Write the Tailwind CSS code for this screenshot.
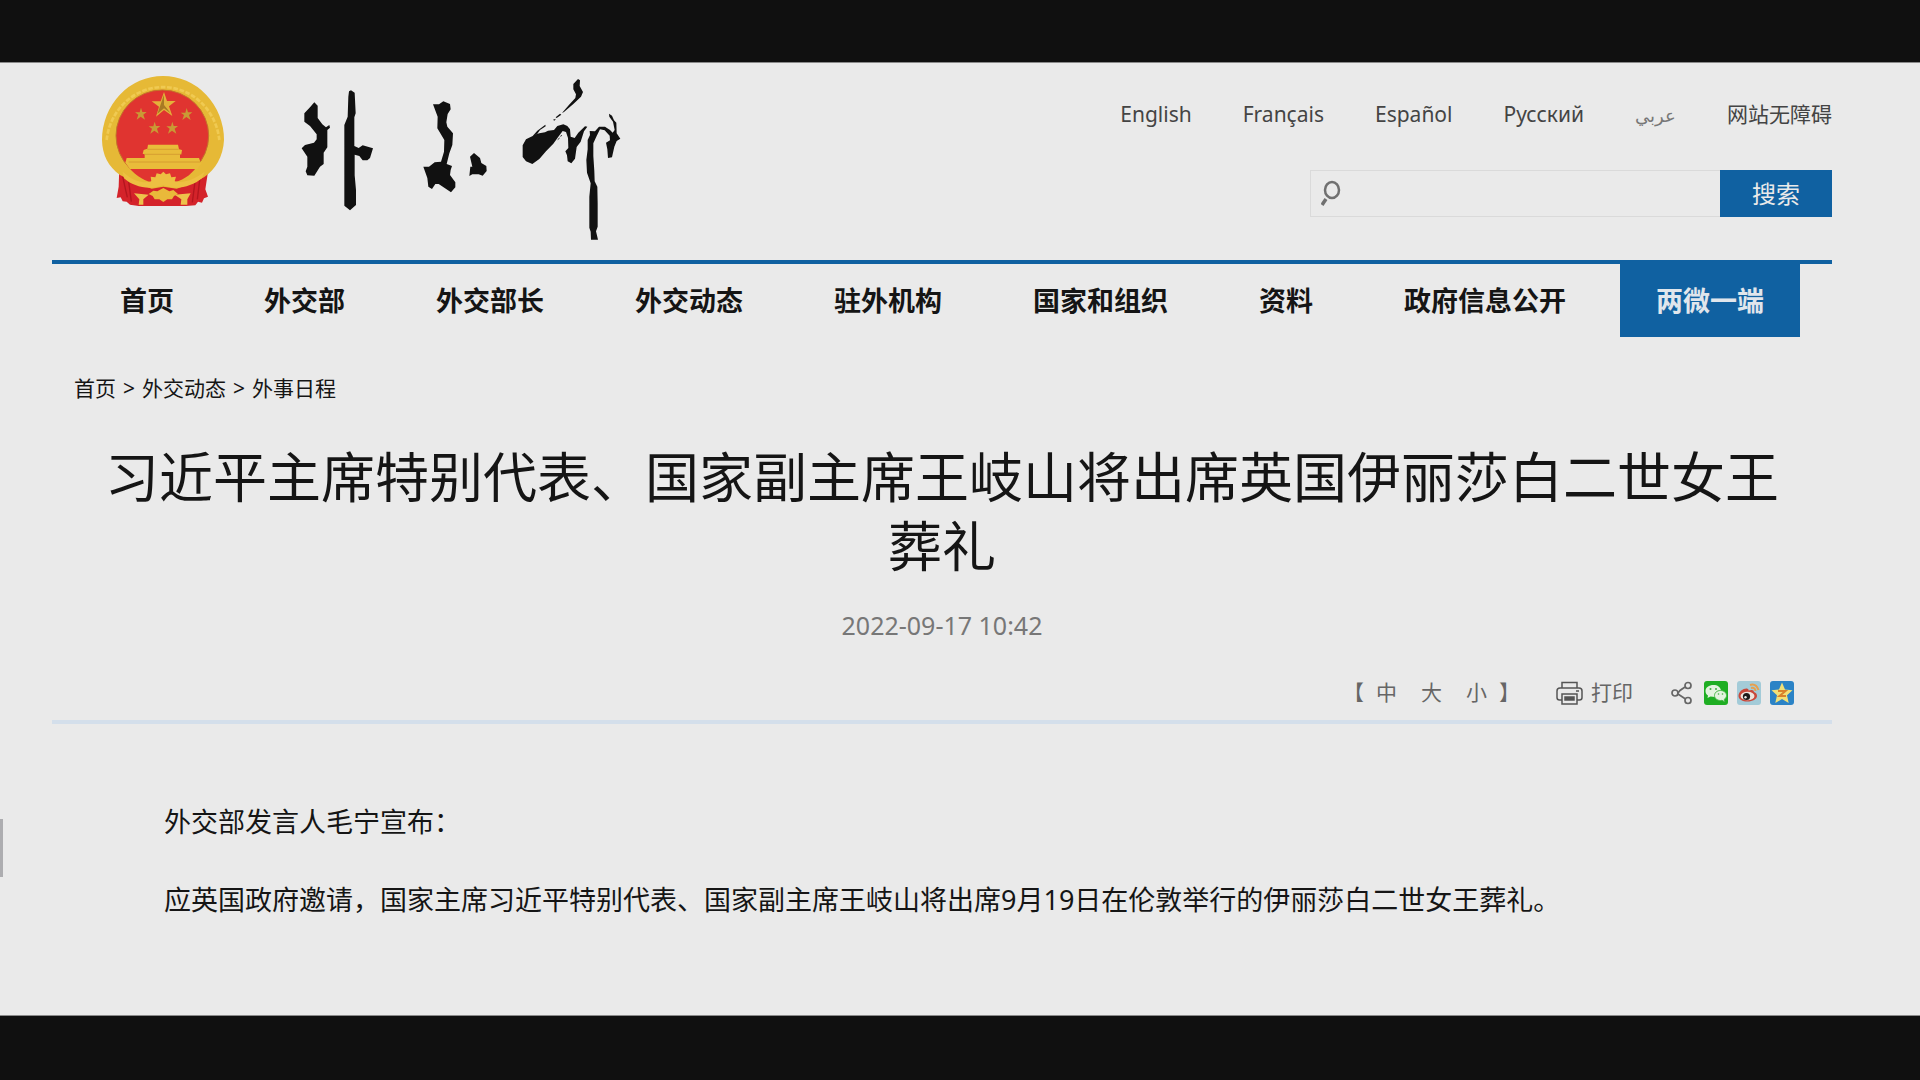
<!DOCTYPE html>
<html lang="zh-CN">
<head>
<meta charset="utf-8">
<meta name="viewport" content="width=device-width, initial-scale=1">
<title>外交部 - 外事日程</title>
<script src="https://cdn.jsdelivr.net/npm/@tailwindcss/browser@4"></script>
</head>
<body class="min-h-screen flex flex-col bg-[#101010] pt-[62px] pb-16 text-[#151515] font-['Noto_Sans','Noto_Sans_CJK_SC',sans-serif]">
<div class="relative flex-1 bg-[#eaeaea] border-y border-[#8a8a8a] pl-[52px] pr-[88px]">
  <div class="absolute left-0 bottom-[138px] w-[3px] h-[58px] bg-[#adadb0]"></div>

  <header class="flex justify-between h-[197px]">
    <a href="#" aria-label="外交部" class="flex items-start gap-[75px] pl-12 pt-3">
      <svg class="w-[125px] h-[132px]" viewBox="60 45 375 396" aria-hidden="true">
        <path d="M118 322L384 335L376 388L384 410L372 415L366 428L354 425L346 436L318 438H186L176 438L150 434L140 425L128 424L122 412L110 414L116 380Z" fill="#d4232a"/>
        <path d="M128 350l14 62M146 365l8 60M360 352l-8 66M345 365l-8 62" stroke="#b3161e" stroke-width="4" fill="none"/>
        <path d="M66 240A183 192 0 0 1 432 240C430 290 405 330 372 352L330 372L290 386L250 380L215 386L160 365L120 345C85 320 67 285 66 240Z" fill="#e6b936"/>
        <path d="M80 240A170 178 0 0 1 418 240" stroke="#f0ca52" stroke-width="8" stroke-dasharray="14 5" fill="none"/>
        <ellipse cx="247" cy="227" rx="139" ry="137" fill="#e03430" stroke="#c4742b" stroke-width="3"/>
        <path d="M137 308C160 345 190 360 212 366L225 350H272L285 366C315 358 340 340 357 308Z" fill="#e03430"/>
        <path d="M252 96L261 123H287L267 139L277 168L252 150L228 170L237 140L215 124H242Z" fill="#e3b13a"/>
        <path d="M252 104V135L272 160L252 145L232 162Z" fill="#a87a24"/>
        <g fill="#c99a35">
          <path id="st" d="M183 143L187 156H200L190 164L195 179L182 170L170 179L175 164L165 157H179Z"/>
          <use href="#st" x="137" y="1"/><use href="#st" x="41" y="42"/><use href="#st" x="94" y="42"/>
        </g>
        <path d="M204 254H294L297 268L306 270L304 283H300V294H357L362 308H366L352 327H150L136 308L140 294H194V283L188 281L191 270L202 266Z" fill="#e9bc3a"/>
        <path d="M202 268H296M192 283H304M146 306H360" stroke="#cf8f2c" stroke-width="2"/>
        <path d="M128 335C160 365 195 372 214 364L212 350L226 352L230 340L242 343L250 335L258 343L270 340L274 352L288 350L284 364C310 370 340 360 374 335L366 355C335 380 290 392 250 376C205 392 160 380 132 355Z" fill="#edc042"/>
        <path d="M206 402L220 392L232 394L250 384L268 394L280 390L294 402L282 408L276 418L262 418L250 426L238 418L224 418L218 408Z" fill="#e9b93a"/>
        <path d="M162 400L206 404L190 418V434H176L178 418ZM332 400L284 404L304 418L302 434H322V418Z" fill="#edc24b"/>
      </svg>
      <svg class="w-[322px] h-[165px] mt-0.5" viewBox="60 21 966 495" fill="#111" aria-hidden="true">
        <path d="M103 97L113 107V144L127 163L138 172L148 165L150 173L142 180V232L131 248V282L120 290L103 317L82 316L77 304L82 290V260L65 235L75 225L102 218L110 208V193L90 168L73 155V130L90 112Z"/>
        <path d="M207 64L213 61L224 68L227 130L223 142V228L236 234L248 226L279 235L270 264L262 271H248L238 258L224 254V316L228 360V405L210 421L193 407V165L203 140L205 80Z"/>
        <path d="M459 103L477 103L490 94L510 102L512 118L503 132L499 157L502 170L519 190L517 225L508 250L500 282L516 288L512 300L510 315L526 337V352L513 367L494 354L476 342H466L456 357L445 350L442 324L430 290L447 290L464 277L483 275L492 245L493 210L472 175L473 140Z"/>
        <path d="M570 260L582 249L600 264L604 279L619 288L620 303L608 317L596 313H577L568 318L571 290H577Z"/>
        <path d="M894 27L900 31L899 48L909 66L903 80L880 102L852 126L846 129L866 106L886 84L888 73L880 58V42ZM840 131L844 134L830 144L827 142ZM819 149L828 146L823 152Z"/>
        <path d="M796 164L797 169L780 180L772 191L764 194L778 190L795 187L804 182L822 180L832 168L850 163L862 168L870 178L872 200L884 204L895 188L915 169L922 170L912 184L902 215L890 231L885 266L874 280L863 274L861 256L856 244L865 234L864 204L858 186L848 183L834 202L820 221L798 244L778 267L757 282L738 274L728 261V226L738 208L758 198L772 182Z"/>
        <path d="M929 183L945 184L957 170H975L990 180L998 188L1004 180L999 155L988 140L987 131L996 137L1002 151L1009 158L1010 190L1021 206L1010 213L1003 230L996 262L984 264L982 238L978 218L990 211L989 197L974 181L960 178L950 198L940 220V258L943 304L944 334L952 350L953 400V470L948 484L954 509H933L932 485L928 473V380L932 340L921 308L919 270L923 238V210L930 195Z"/>
        <path d="M833 209l6-5M841 199l5-3M1028 212l2 2" stroke="#333" stroke-width="3"/>
      </svg>
    </a>

    <div class="flex flex-col items-end pt-9">
      <nav aria-label="语言" class="flex gap-[51px] h-8 items-center text-[21px] text-[#444]">
        <a href="#">English</a>
        <a href="#">Français</a>
        <a href="#">Español</a>
        <a href="#">Русский</a>
        <a href="#" lang="ar" class="text-lg text-[#777]">عربي</a>
        <a href="#">网站无障碍</a>
      </nav>
      <form class="flex mt-[39px] h-[47px]" role="search">
        <label class="flex items-center w-[410px] pl-2.5 border border-r-0 border-[#dadada]">
          <svg class="w-5 h-7 shrink-0" viewBox="0 0 20 28" fill="none" stroke="#707070" aria-hidden="true">
            <ellipse cx="11" cy="10" rx="7" ry="8" stroke-width="2.500"/>
            <path d="M5 19L1 25" stroke-width="3.500"/>
          </svg>
          <input type="search" aria-label="搜索" class="flex-1 min-w-0 h-full px-2 bg-transparent outline-none text-xl">
        </label>
        <button type="button" class="w-28 bg-[#1061a1] text-2xl text-[#eaeaea]">搜索</button>
      </form>
    </div>
  </header>

  <nav aria-label="主导航" class="flex gap-[17px] pl-8 border-t-4 border-[#1061a1] h-[77px] text-[27px] font-bold whitespace-nowrap">
    <a href="#" class="flex items-center pt-0.5 px-9">首页</a>
    <a href="#" class="flex items-center pt-0.5 px-[37px]">外交部</a>
    <a href="#" class="flex items-center pt-0.5 px-[37px]">外交部长</a>
    <a href="#" class="flex items-center pt-0.5 px-[37px]">外交动态</a>
    <a href="#" class="flex items-center pt-0.5 px-[37px]">驻外机构</a>
    <a href="#" class="flex items-center pt-0.5 px-[37px]">国家和组织</a>
    <a href="#" class="flex items-center pt-0.5 px-[37px]">资料</a>
    <a href="#" class="flex items-center pt-0.5 px-[37px]">政府信息公开</a>
    <a href="#" class="flex items-center pt-0.5 px-9 bg-[#1061a1] text-[#e0e6ec]">两微一端</a>
  </nav>

  <nav aria-label="当前位置" class="flex items-center gap-[7px] pl-[22px] mt-9 h-8 text-[21px]">
    <a href="#">首页</a><span>&gt;</span><a href="#">外交动态</a><span>&gt;</span><a href="#">外事日程</a>
  </nav>

  <main>
    <h1 class="mt-[38px] px-12 text-center text-[54px] leading-[69px]">习近平主席特别代表、国家副主席王岐山将出席英国伊丽莎白二世女王葬礼</h1>
    <p class="mt-7 h-8 leading-8 text-center text-[25px] text-[#777]"><time datetime="2022-09-17T10:42">2022-09-17 10:42</time></p>

    <div class="flex items-center justify-end h-8 mt-9 pr-[38px] text-[21px] text-[#666]">
      <div class="flex items-center mr-9">
        <span>【</span>
        <button type="button" class="ml-3">中</button>
        <button type="button" class="ml-6">大</button>
        <button type="button" class="ml-6">小</button>
        <span class="ml-3">】</span>
      </div>
      <button type="button" class="flex items-center gap-2 mr-[38px]">
        <svg class="w-[27px] h-6" viewBox="0 0 27 24" fill="none" stroke="#555" stroke-width="1.500" aria-hidden="true">
          <path d="M6 7V1.500H21V7M6 19H3.500Q1 19 1 16.500V10Q1 7 4 7H23Q26 7 26 10V16.500Q26 19 23.500 19H21M6 13H21V23H6ZM20 10H23"/>
          <path d="M9 16H18V19H9Z" fill="#555"/>
        </svg>
        <span>打印</span>
      </button>
      <div class="flex items-center gap-[9px]">
        <button type="button" aria-label="分享" class="mr-0.5">
          <svg class="w-[22px] h-6" viewBox="0 0 22 24" fill="none" stroke="#666" stroke-width="1.700" aria-hidden="true">
            <circle cx="4" cy="12" r="3"/><circle cx="17" cy="4.500" r="3"/><circle cx="17" cy="19.500" r="3"/><path d="M7 12L9 9.500L14 6M7 13L14.500 18"/>
          </svg>
        </button>
        <a href="#" aria-label="微信">
          <svg class="size-6" viewBox="0 0 24 24" aria-hidden="true">
            <rect width="24" height="24" rx="3" fill="#1fae23"/>
            <path d="M9.500 4C5 4 1.500 6.500 1.500 10C1.500 12 2.500 13.500 4 14.500L3.500 17L6.500 15.500L11 16L17 9.500C16.500 6 13.500 4 9.500 4Z" fill="#e4f3df"/>
            <path d="M16.500 9.500C13 9.500 10.500 11.700 10.500 14.500S13 19.500 16.500 19.500L18 19.300L20.800 20.800L20.300 18.300C21.800 17.300 22.500 16 22.500 14.500C22.500 11.700 20 9.500 16.500 9.500Z" fill="#e4f3df" stroke="#48b748"/>
            <g fill="#3fae40"><circle cx="6.500" cy="8" r="1"/><circle cx="12" cy="8" r="1"/><circle cx="14.500" cy="13" r=".8"/><circle cx="18.500" cy="13" r=".8"/></g>
          </svg>
        </a>
        <a href="#" aria-label="微博">
          <svg class="size-6" viewBox="0 0 24 24" aria-hidden="true">
            <rect width="24" height="24" rx="3" fill="#a3cbd8"/>
            <path d="M13 4Q19 2 21.500 9M14 7Q18 6 18.500 10" fill="none" stroke="#e8a04c" stroke-width="2"/>
            <path d="M1.500 15C1.500 10 7 7 10 7.500Q12 8 11.500 9.500Q17 8 17 11Q20 12 20 15C20 18 15.500 20.500 10.500 20.500S1.500 18.500 1.500 15Z" fill="#c9473a"/>
            <ellipse cx="10.500" cy="15" rx="7" ry="4.300" fill="#eee3dc"/>
            <circle cx="9.500" cy="15.500" r="3.600" fill="#1c1a1a"/><circle cx="8.500" cy="16.300" r="1.200" fill="#eee"/>
          </svg>
        </a>
        <a href="#" aria-label="QQ空间">
          <svg class="size-6" viewBox="0 0 24 24" aria-hidden="true">
            <rect width="24" height="24" rx="3" fill="#2b83c6"/>
            <path d="M12 1.500L15 8.500L22.500 9.300L17 14.300L18.700 22L12 18L5.300 22L7 14.300L1.500 9.300L9 8.500Z" fill="#f1e078"/>
            <path d="M8 10H15.500L9.500 15H16" fill="none" stroke="#d9822b" stroke-width="2"/>
          </svg>
        </a>
      </div>
    </div>
    <hr class="mt-[11px] border-0 h-1 bg-[#d4dfeb]">

    <article class="pt-[78px] px-28 text-[27px] leading-10">
      <p>外交部发言人毛宁宣布：</p>
      <p class="mt-[38px]">应英国政府邀请，国家主席习近平特别代表、国家副主席王岐山将出席9月19日在伦敦举行的伊丽莎白二世女王葬礼。</p>
    </article>
  </main>
</div>
</body>
</html>
